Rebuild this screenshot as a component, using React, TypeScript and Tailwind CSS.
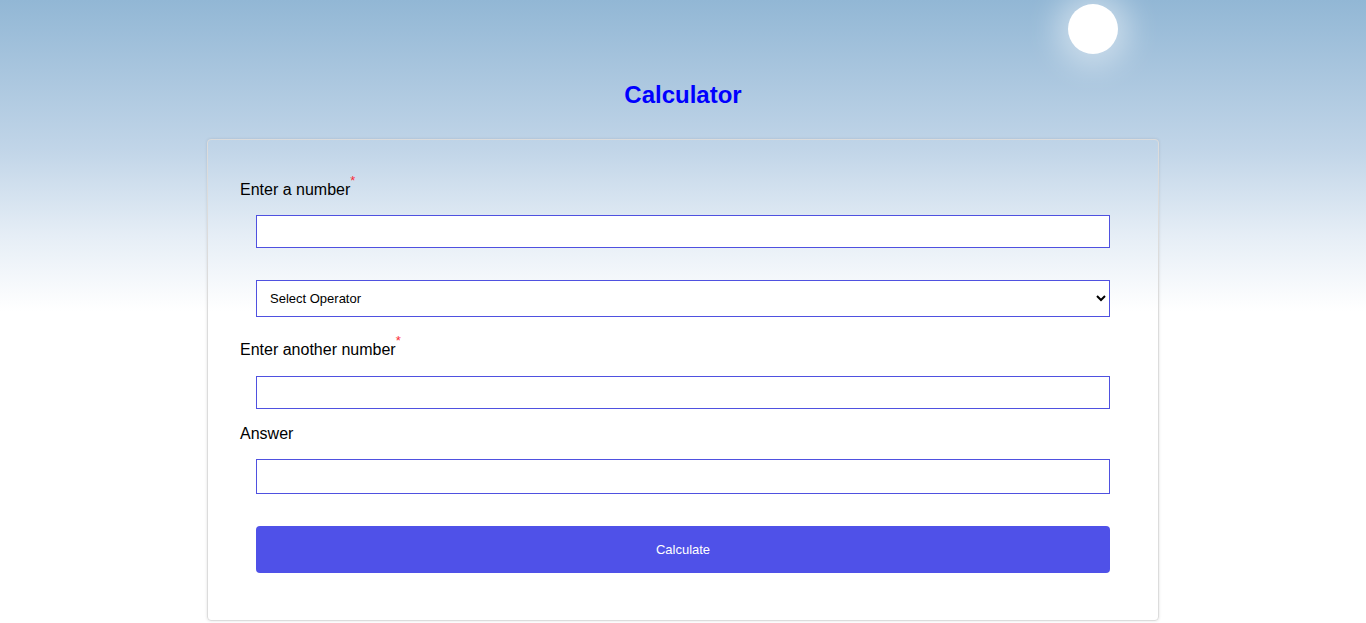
export default function App() {
  return (
    <div className="relative min-h-[623px] w-full overflow-hidden bg-[linear-gradient(to_bottom,#92b7d5_0%,#c1d5e8_24%,#e6eef6_38%,#ffffff_50%,#ffffff_100%)] font-['Liberation_Sans',Arial,sans-serif] text-black">
      {/* sun */}
      <div className="absolute left-[1068px] top-[4px] h-[50px] w-[50px] rounded-full bg-white shadow-[0_0_30px_12px_rgba(255,255,255,0.45)]" />

      <h1 className="pt-[80px] text-center text-[24px] font-bold leading-[30px] text-[#0000ff]">Calculator</h1>

      <div className="mx-auto mt-[29px] w-[952px] rounded-[4px] border border-[#dcdcdc] px-[32px] pb-[47px] pt-[38px] shadow-[0_0_3px_rgba(0,0,0,0.12)]">
        <label className="block text-[16px] leading-[24px]">
          Enter a number<sup className="top-[-0.8em] text-[13px] text-red-500">*</sup>
        </label>
        <input type="number" className="ml-[16px] mt-[13px] block h-[33px] w-[854px] border border-[#4f51e0] bg-white px-2 outline-none" />

        <div className="ml-[16px] mt-[32px] w-[854px]">
          <select className="block h-[37px] w-full border border-[#4f51e0] bg-white pl-[9px] pr-2 text-[13px] outline-none">
            <option>Select Operator</option>
            <option>+</option>
            <option>-</option>
            <option>*</option>
            <option>/</option>
          </select>
        </div>

        <label className="mt-[21px] block text-[16px] leading-[24px]">
          Enter another number<sup className="top-[-0.8em] text-[13px] text-red-500">*</sup>
        </label>
        <input type="number" className="ml-[16px] mt-[14px] block h-[33px] w-[854px] border border-[#4f51e0] bg-white px-2 outline-none" />

        <label className="mt-[13px] block text-[16px] leading-[24px]">Answer</label>
        <input type="text" readOnly className="ml-[16px] mt-[13px] block h-[35px] w-[854px] border border-[#4f51e0] bg-white px-2 outline-none" />

        <button className="ml-[16px] mt-[32px] block h-[47px] w-[854px] rounded-[4px] bg-[#4f51e8] text-[13px] text-white">Calculate</button>
      </div>
    </div>
  );
}
